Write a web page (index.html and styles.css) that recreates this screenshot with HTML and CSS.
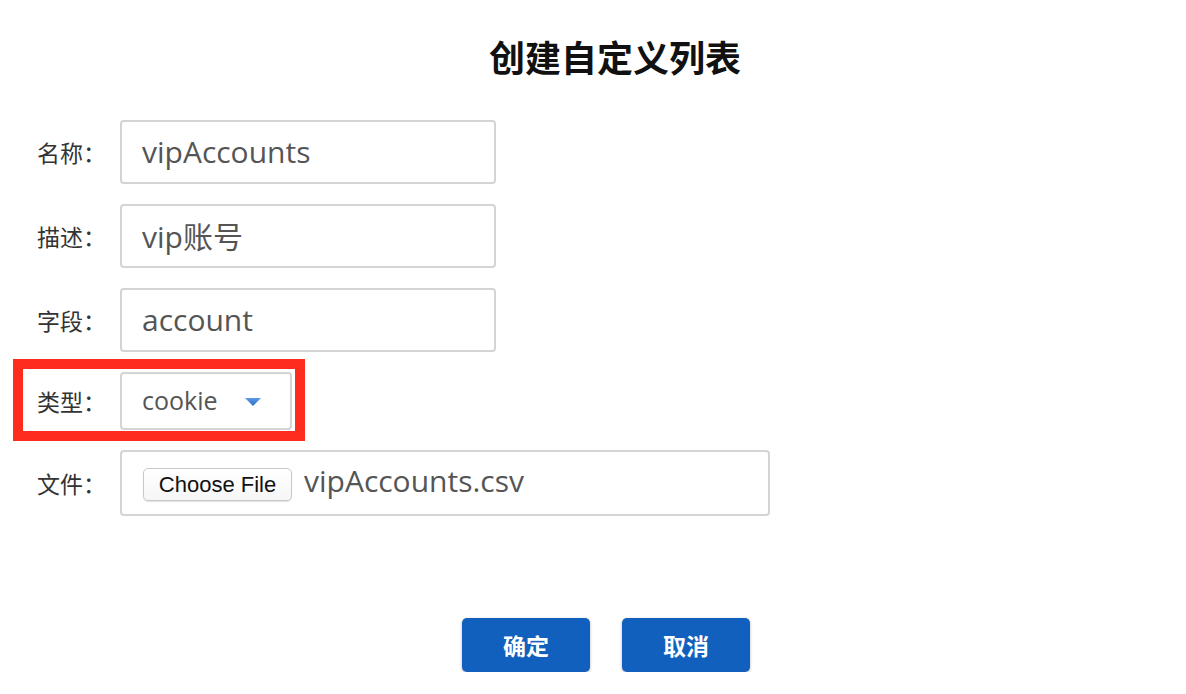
FILE: index.html
```html
<!DOCTYPE html>
<html lang="zh">
<head>
<meta charset="utf-8">
<title>创建自定义列表</title>
<link rel="stylesheet" href="styles.css">
</head>
<body>
<div class="page">
  <h1 class="title">创建自定义列表</h1>
  <form class="form">
    <div class="row">
      <label class="label">名称：</label>
      <input class="field field-text" type="text" value="vipAccounts">
    </div>
    <div class="row">
      <label class="label">描述：</label>
      <input class="field field-text" type="text" value="vip账号">
    </div>
    <div class="row">
      <label class="label">字段：</label>
      <input class="field field-text" type="text" value="account">
    </div>
    <div class="row row-highlight">
      <label class="label">类型：</label>
      <div class="select">
        <span class="select-value">cookie</span>
        <svg class="select-arrow" width="16" height="8" viewBox="0 0 16 8"><defs><linearGradient id="ag" x1="0" y1="0" x2="0" y2="1"><stop offset="0" stop-color="#5b9be6"/><stop offset="1" stop-color="#2c6cc4"/></linearGradient></defs><path d="M0 0 H16 L8 8 Z" fill="url(#ag)"/></svg>
      </div>
    </div>
    <div class="row">
      <label class="label">文件：</label>
      <div class="field field-file">
        <button type="button" class="file-btn">Choose File</button>
        <span class="file-name">vipAccounts.csv</span>
      </div>
    </div>
  </form>
  <div class="actions">
    <button type="button" class="btn">确定</button>
    <button type="button" class="btn">取消</button>
  </div>
</div>
</body>
</html>
```

FILE: styles.css
```css
html, body {
  margin: 0;
  padding: 0;
  background: #ffffff;
}

body {
  font-family: "Open Sans", "Noto Sans CJK SC", sans-serif;
  color: #333;
}

.page {
  width: 1186px;
  padding-top: 35px;
}

.title {
  margin: 0 0 43px 0;
  padding-left: 44px;
  text-align: center;
  font-family: "Noto Sans CJK SC", sans-serif;
  font-weight: 700;
  font-size: 36px;
  line-height: 42px;
  color: #111;
}

.form {
  display: flex;
  flex-direction: column;
  gap: 20px;
  padding-left: 37px;
}

.row {
  display: flex;
  align-items: center;
}

.row-highlight {
  position: relative;
  align-self: flex-start;
}

.row-highlight::after {
  content: "";
  position: absolute;
  left: -24px;
  right: -13px;
  top: -13px;
  bottom: -11px;
  border: 10px solid #fe2b1f;
  pointer-events: none;
}

.label {
  width: 83px;
  flex: none;
  font-family: "Noto Sans CJK SC", sans-serif;
  font-size: 23px;
  color: #333;
}

.field {
  box-sizing: border-box;
  border: 2px solid #d4d4d4;
  border-radius: 4px;
  background: #fff;
}

.field-text {
  width: 376px;
  height: 64px;
  padding: 0 0 2px 20px;
  font-family: "Open Sans", "Noto Sans CJK SC", sans-serif;
  font-size: 30px;
  color: #555;
  outline: none;
  margin: 0;
}

.select {
  box-sizing: border-box;
  width: 172px;
  height: 58px;
  border: 2px solid #d4d4d4;
  border-radius: 4px;
  display: flex;
  align-items: center;
  padding-left: 20px;
}

.select-value {
  font-family: "Open Sans", sans-serif;
  font-size: 25px;
  color: #555;
  width: 103px;
  padding-bottom: 2px;
}

.select-arrow {
  display: block;
  margin-top: 2px;
}

.field-file {
  width: 650px;
  height: 66px;
  display: flex;
  align-items: center;
  padding-left: 21px;
  gap: 12px;
}

.file-btn {
  box-sizing: border-box;
  height: 33px;
  width: 149px;
  margin: 0;
  padding: 0;
  border: 1px solid #c8c8c8;
  border-radius: 5px;
  background: linear-gradient(#ffffff, #f6f6f6);
  box-shadow: 0 1px 1px rgba(0,0,0,0.12);
  font-family: "Liberation Sans", Arial, sans-serif;
  font-size: 22px;
  color: #111;
  margin-top: 3px;
}

.file-name {
  font-family: "Open Sans", sans-serif;
  font-size: 30px;
  color: #555;
  margin-top: -6px;
}

.actions {
  display: flex;
  justify-content: center;
  gap: 32px;
  margin-top: 102px;
  padding-left: 26px;
}

.btn {
  width: 128px;
  height: 54px;
  border: none;
  border-radius: 5px;
  background: #1260bd;
  color: #fff;
  font-family: "Noto Sans CJK SC", sans-serif;
  font-weight: 700;
  font-size: 23px;
  box-shadow: 0 1px 3px rgba(0,0,0,0.3);
  padding: 0;
}
```
